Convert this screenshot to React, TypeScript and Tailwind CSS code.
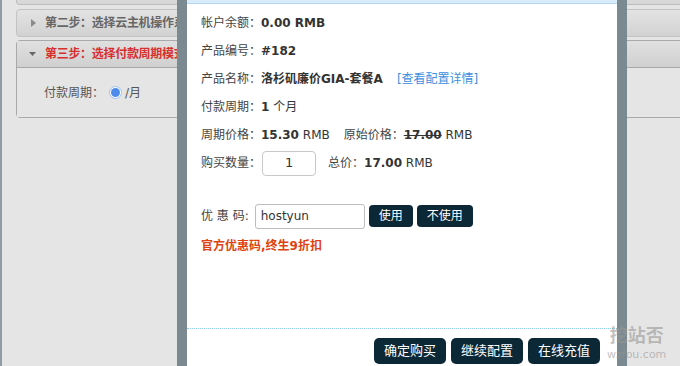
import React from "react";

const FONT = "font-['DejaVu_Sans','Noto_Sans_CJK_SC',sans-serif]";

function Row({ children, className = "" }: { children: React.ReactNode; className?: string }) {
  return <div className={`flex h-[28px] items-center whitespace-nowrap ${className}`}>{children}</div>;
}

function Label({ children }: { children: React.ReactNode }) {
  return <span className="text-[#444]">{children}</span>;
}

function DarkButton({ children, className = "" }: { children: React.ReactNode; className?: string }) {
  return (
    <button className={`flex items-center justify-center bg-[#0c2736] text-white ${className}`}>
      {children}
    </button>
  );
}

function Accordion() {
  return (
    <div className="flex w-[720px] shrink-0 flex-col pl-[14px]">
      {/* previous step, mostly scrolled away */}
      <div className="h-[5px] rounded-b-[4px] border-x border-b border-[#bdbdbd] bg-[#d8d8d8]" />

      <div className="mt-[4px] flex h-[28px] items-center rounded-[4px] border border-[#c2c2c2] bg-gradient-to-b from-[#e3e3e3] to-[#d2d2d2] pl-[14px]">
        <svg width="5" height="8" viewBox="0 0 5 8" className="mr-[9px]">
          <path d="M0 0 L5 4 L0 8 Z" fill="#8a8a8a" />
        </svg>
        <span className="text-[12px] font-bold tracking-[-0.3px] text-[#666]">第二步：选择云主机操作系统</span>
      </div>

      <div className="mt-[3px] rounded-[4px] border border-[#a9a9a9]">
        <div className="flex h-[27px] items-center border-b border-[#a9a9a9] bg-gradient-to-b from-[#e0e0e0] to-[#d0d0d0] pl-[12px]">
          <svg width="7" height="4" viewBox="0 0 7 4" className="mr-[9px]">
            <path d="M0 0 L7 0 L3.5 4 Z" fill="#666" />
          </svg>
          <span className="text-[12px] font-bold tracking-[-0.3px] text-[#d8302e]">第三步：选择付款周期模式</span>
        </div>
        <div className="flex h-[49px] items-center bg-[#e5e5e5] pl-[27px] text-[12px] text-[#555]">
          <span>付款周期：</span>
          <span className="ml-[5px] flex h-[13px] w-[13px] items-center justify-center rounded-full border border-[#9cc0f4] bg-white">
            <span className="h-[9px] w-[9px] rounded-full bg-[#4d8ae9]" />
          </span>
          <span className="ml-[3px]">/月</span>
        </div>
      </div>
    </div>
  );
}

export default function App() {
  return (
    <div className={`relative h-[366px] w-[680px] overflow-hidden bg-[#e5e5e5] ${FONT}`}>
      <div className="flex h-full">
        <div className="w-[2px] shrink-0 bg-[#8e9ca4]" />
        <Accordion />
      </div>

      {/* order dialog */}
      <div className="absolute left-[177px] top-0 w-[450px] border-x-[10px] border-[#7a8a90]">
        <div className="flex flex-col bg-white">
          <div className="h-[4px] border-b border-[#b3d6f2] bg-[#d8ecfb]" />

          <div className="h-[324px] pl-[14px] pt-[5px] text-[12px] text-[#333]">
            <Row>
              <Label>帐户余额：</Label>
              <b>0.00 RMB</b>
            </Row>
            <Row>
              <Label>产品编号：</Label>
              <b>#182</b>
            </Row>
            <Row>
              <Label>产品名称：</Label>
              <b>洛杉矶廉价GIA-套餐A</b>
              <span className="ml-[14px] text-[#3d8fe0]">[查看配置详情]</span>
            </Row>
            <Row>
              <Label>付款周期：</Label>
              <b>1</b>
              <span>&nbsp;个月</span>
            </Row>
            <Row>
              <Label>周期价格：</Label>
              <b>15.30</b>
              <span>&nbsp;RMB</span>
              <span className="ml-[14px] text-[#444]">原始价格：</span>
              <b className="line-through">17.00</b>
              <span>&nbsp;RMB</span>
            </Row>
            <Row>
              <Label>购买数量：</Label>
              <div className="ml-[1px] flex h-[25px] w-[54px] items-center justify-center rounded-[4px] border border-[#c9c9c9] text-[13px] text-[#333]">
                1
              </div>
              <span className="ml-[12px] text-[#444]">总价：</span>
              <b>17.00</b>
              <span>&nbsp;RMB</span>
            </Row>

            <Row className="mt-[25px]">
              <Label>优 惠 码:</Label>
              <div className="ml-[6px] flex h-[25px] w-[110px] items-center rounded-[3px] border border-[#bdbdbd] pl-[5px] text-[12px] text-[#333]">
                hostyun
              </div>
              <DarkButton className="ml-[4px] h-[22px] w-[44px] rounded-[4px] text-[12px]">使用</DarkButton>
              <DarkButton className="ml-[4px] h-[22px] w-[56px] rounded-[4px] text-[12px]">不使用</DarkButton>
            </Row>
            <Row className="mt-[2px]">
              <b className="text-[#dd4312]">官方优惠码,终生9折扣</b>
            </Row>
          </div>

          <div className="border-t border-dotted border-[#8fcdf3]" />
          <div className="flex h-[60px] justify-end gap-[5px] pr-[17px] pt-[9px]">
            <DarkButton className="h-[26px] w-[72px] rounded-[5px] text-[13px]">确定购买</DarkButton>
            <DarkButton className="h-[26px] w-[72px] rounded-[5px] text-[13px]">继续配置</DarkButton>
            <DarkButton className="h-[26px] w-[72px] rounded-[5px] text-[13px]">在线充值</DarkButton>
          </div>
        </div>
      </div>

      {/* site watermark */}
      <div className="absolute left-[607px] top-[327px] flex flex-col items-center leading-none text-[rgba(150,150,150,0.6)]">
        <span className="text-[18px] font-bold">挖站否</span>
        <span className="mt-[4px] text-[11px]">wzfou.com</span>
      </div>
    </div>
  );
}
